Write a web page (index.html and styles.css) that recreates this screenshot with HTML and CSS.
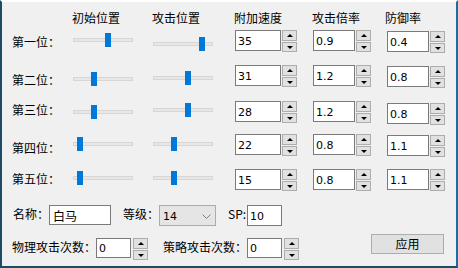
FILE: index.html
```html
<!DOCTYPE html>
<html lang="zh-CN">
<head>
  <meta charset="UTF-8">
  <title>武将设置</title>
  <link rel="stylesheet" href="styles.css">
</head>
<body>
<div class="win">
  <div class="grid">
    <div></div>
    <div class="hd">初始位置</div>
    <div class="hd">攻击位置</div>
    <div class="hd">附加速度</div>
    <div class="hd">攻击倍率</div>
    <div class="hd hd-last">防御率</div>

    <!-- row 1 -->
    <div class="lbl t4">第一位：</div>
    <div class="slider t3"><div class="track"></div><div class="thumb" style="left:32px"></div></div>
    <div class="slider t7"><div class="track"></div><div class="thumb" style="left:46px"></div></div>
    <div class="spin t0"><input class="box w46" value="35"><div class="arrows"><span class="up"></span><span class="dn"></span></div></div>
    <div class="spin t0"><input class="box w42" value="0.9"><div class="arrows"><span class="up"></span><span class="dn"></span></div></div>
    <div class="spin t1"><input class="box w42" value="0.4"><div class="arrows"><span class="up"></span><span class="dn"></span></div></div>

    <!-- row 2 -->
    <div class="lbl t8">第二位：</div>
    <div class="slider t8"><div class="track"></div><div class="thumb" style="left:18px"></div></div>
    <div class="slider t7"><div class="track"></div><div class="thumb" style="left:32px"></div></div>
    <div class="spin t1"><input class="box w46" value="31"><div class="arrows"><span class="up"></span><span class="dn"></span></div></div>
    <div class="spin t1"><input class="box w42" value="1.2"><div class="arrows"><span class="up"></span><span class="dn"></span></div></div>
    <div class="spin t2"><input class="box w42" value="0.8"><div class="arrows"><span class="up"></span><span class="dn"></span></div></div>

    <!-- row 3 -->
    <div class="lbl t2">第三位：</div>
    <div class="slider t5"><div class="track"></div><div class="thumb" style="left:18px"></div></div>
    <div class="slider t3"><div class="track"></div><div class="thumb" style="left:32px"></div></div>
    <div class="spin t1"><input class="box w46" value="28"><div class="arrows"><span class="up"></span><span class="dn"></span></div></div>
    <div class="spin t1"><input class="box w42" value="1.2"><div class="arrows"><span class="up"></span><span class="dn"></span></div></div>
    <div class="spin t3"><input class="box w42" value="0.8"><div class="arrows"><span class="up"></span><span class="dn"></span></div></div>

    <!-- row 4 -->
    <div class="lbl t6">第四位：</div>
    <div class="slider t3"><div class="track"></div><div class="thumb" style="left:4px"></div></div>
    <div class="slider t3"><div class="track"></div><div class="thumb" style="left:18px"></div></div>
    <div class="spin t0"><input class="box w46" value="22"><div class="arrows"><span class="up"></span><span class="dn"></span></div></div>
    <div class="spin t0"><input class="box w42" value="0.8"><div class="arrows"><span class="up"></span><span class="dn"></span></div></div>
    <div class="spin t1"><input class="box w42" value="1.1"><div class="arrows"><span class="up"></span><span class="dn"></span></div></div>

    <!-- row 5 -->
    <div class="lbl t2">第五位：</div>
    <div class="slider t2"><div class="track"></div><div class="thumb" style="left:4px"></div></div>
    <div class="slider t2"><div class="track"></div><div class="thumb" style="left:18px"></div></div>
    <div class="spin t0"><input class="box w46" value="15"><div class="arrows"><span class="up"></span><span class="dn"></span></div></div>
    <div class="spin t0"><input class="box w42" value="0.8"><div class="arrows"><span class="up"></span><span class="dn"></span></div></div>
    <div class="spin t0"><input class="box w42" value="1.1"><div class="arrows"><span class="up"></span><span class="dn"></span></div></div>
  </div>

  <div class="foot">
    <div class="line">
      <div class="lbl t1 name-lbl">名称：</div>
      <input class="box name" value="白马">
      <div class="lbl t1 gap-l">等级：</div>
      <div class="combo"><span>14</span><svg width="9" height="5" viewBox="0 0 9 5"><polyline points="0.5,0.5 4.5,4.5 8.5,0.5" fill="none" stroke="#808080" stroke-width="1"/></svg></div>
      <div class="lbl t1 gap-l sp">SP:</div>
      <input class="box sp-box" value="10">
    </div>
    <div class="line line2">
      <div class="lbl t5">物理攻击次数：</div>
      <div class="spin t4"><input class="box small" value="0"><div class="arrows tall"><span class="up"></span><span class="dn"></span></div></div>
      <div class="lbl t5 gap-m">策略攻击次数：</div>
      <div class="spin t4"><input class="box small" value="0"><div class="arrows tall"><span class="up"></span><span class="dn"></span></div></div>
      <button class="btn">应用</button>
    </div>
  </div>
</div>
</body>
</html>
```

FILE: styles.css
```css
html, body {
  margin: 0;
  background: #f0f0f0;
}

body {
  font-family: "Noto Sans CJK SC", sans-serif;
  font-size: 12px;
  line-height: 16px;
  color: #000;
}

.win {
  width: 458px;
  height: 268px;
  box-sizing: border-box;
  border-top: 2px solid #ffffff;
  border-left: 2px solid #1d4b66;
  border-right: 2px solid #1a6ca2;
  border-bottom: 2px solid #1d4b66;
  padding: 8px 0 0 10px;
}

.grid {
  display: grid;
  grid-template-columns: 61px 80px 82px 78px 74px 1fr;
  grid-template-rows: 20px 34px 36px 34px 35px 26px;
  align-items: start;
}

.hd {
  margin-left: -1px;
  white-space: nowrap;
}
.hd-last { margin-left: -2px; }

.lbl { white-space: nowrap; }

/* row nudges */
.t0 { margin-top: 0; }
.t1 { margin-top: 1px; }
.t2 { margin-top: 2px; }
.t3 { margin-top: 3px; }
.t4 { margin-top: 4px; }
.t5 { margin-top: 5px; }
.t6 { margin-top: 6px; }
.t7 { margin-top: 7px; }
.t8 { margin-top: 8px; }

/* slider */
.slider {
  position: relative;
  width: 60px;
  height: 14px;
}
.track {
  box-sizing: border-box;
  height: 4px;
  margin-top: 5px;
  background: #e7e7e7;
  border: 1px solid #d6d6d6;
}
.thumb {
  position: absolute;
  top: 0;
  width: 6px;
  height: 14px;
  background: #0078d7;
}

/* spin boxes */
.spin {
  display: flex;
  gap: 1px;
  align-items: flex-start;
}
.box {
  box-sizing: border-box;
  height: 21px;
  margin: 0;
  border: 1px solid #7a7a7a;
  border-radius: 0;
  background: #fff;
  color: #000;
  font: 11px "DejaVu Sans", sans-serif;
  padding: 1px 2px 0;
  outline: none;
}
.w46 { width: 46px; }
.w42 { width: 42px; }
.small { width: 35px; height: 20px; }

.arrows {
  display: flex;
  flex-direction: column;
  gap: 1px;
  width: 15px;
}
.arrows span {
  box-sizing: border-box;
  height: 10px;
  border: 1px solid #adadad;
  background: #e1e1e1;
  display: flex;
  align-items: center;
  justify-content: center;
}
.arrows .up { height: 11px; }
.tall { margin-left: 1px; }
.arrows span::after {
  content: "";
  border-left: 3px solid transparent;
  border-right: 3px solid transparent;
}
.arrows .up::after { border-bottom: 3px solid #000; }
.arrows .dn::after { border-top: 3px solid #000; }

/* footer */
.foot { margin-top: 10px; }
.line {
  display: flex;
  align-items: flex-start;
  height: 21px;
}
.line2 { margin-top: 8px; }

.name-lbl { margin-left: 1px; }
.name {
  width: 62px;
  height: 20px;
  font: 12px "Noto Sans CJK SC", sans-serif;
  padding: 0 3px;
}
.gap-l { margin-left: 12px; }
.gap-m { margin-left: 15px; }

.combo {
  box-sizing: border-box;
  width: 57px;
  height: 21px;
  border: 1px solid #acacac;
  background: #e5e5e5;
  display: flex;
  align-items: center;
  justify-content: space-between;
  padding: 1px 4px 0 3px;
  font: 11px "DejaVu Sans", sans-serif;
}

.sp { width: 19px; }
.sp-box { width: 35px; }

.btn {
  box-sizing: border-box;
  width: 73px;
  height: 20px;
  margin: 0 12px 0 auto;
  padding: 0;
  border: 1px solid #adadad;
  background: #e1e1e1;
  font: 12px/16px "Noto Sans CJK SC", sans-serif;
  color: #000;
}
```
